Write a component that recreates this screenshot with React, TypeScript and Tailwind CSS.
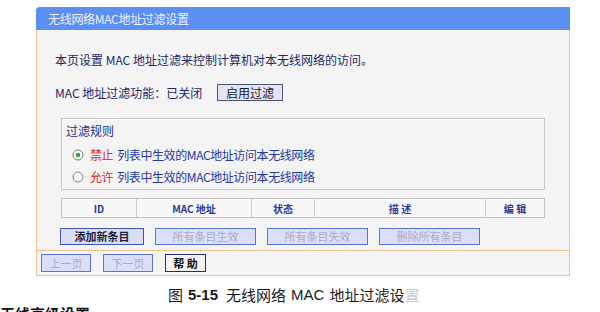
import React from 'react';

const cjk = { fontFamily: '"Noto Sans CJK SC", "Liberation Sans", sans-serif' };

const Radio: React.FC<{ checked?: boolean }> = ({ checked }) => (
    <svg width="12" height="12" viewBox="0 0 12 12" className="shrink-0">
        <circle cx="6" cy="6" r="5" fill="#fbfbfb" stroke="#7d8088" strokeWidth="1" />
        {checked && <circle cx="6" cy="6" r="2.3" fill="#3f9a4a" />}
    </svg>
);

const Btn: React.FC<{ label: string; w: string; disabled?: boolean; strong?: boolean; h?: string }> = ({
    label,
    w,
    disabled,
    strong,
    h = 'h-[17px]',
}) => (
    <div
        className={`${w} ${h} flex items-center justify-center border text-[11px] leading-none ${
            disabled
                ? 'bg-[#dcdff8] border-[#5b73d6] text-[#a9abc9]'
                : strong
                ? 'bg-[#f3f3f6] border-[#24306e] text-[#111] font-bold'
                : 'bg-[#d9ddf6] border-[#3e53b4] text-[#1b1d3a] font-bold'
        }`}
    >
        {label}
    </div>
);

export default function App() {
    return (
        <div className="w-[600px] h-[312px] overflow-hidden bg-white relative" style={cjk}>
            <div className="pt-[7px] pl-[36px]">
                <div className="w-[534px]">
                    {/* title bar */}
                    <div className="h-[23px] bg-[#5c8ff4] rounded-tl-[4px] flex items-center pl-[12px] text-[12px] text-[#eef2ff] tracking-[-0.3px]">
                        无线网络MAC地址过滤设置
                    </div>
                    {/* body */}
                    <div className="bg-[#f4f4f4] border-x border-b border-[#f0c48c]">
                        <div className="pt-[23px] px-[24px] text-[#1c2966]">
                            <div className="h-[14px] flex items-center text-[12px] -ml-[6px]">
                                本页设置 MAC 地址过滤来控制计算机对本无线网络的访问。
                            </div>
                            <div className="mt-[17px] h-[17px] flex items-center -ml-[6px]">
                                <span className="text-[12px] w-[162px]">MAC 地址过滤功能：已关闭</span>
                                <div className="w-[66px] h-[17px] flex items-center justify-center border border-[#4d5378] bg-[#e2e5f6] text-[12px] text-[#1a1a1a]">
                                    启用过滤
                                </div>
                            </div>

                            {/* fieldset */}
                            <div className="mt-[17px] h-[72px] border border-[#c7c7c7] shadow-[inset_1px_1px_0_#ffffff] pl-[4px] pt-[5px]">
                                <div className="h-[14px] flex items-center text-[12px] text-[#233080]">过滤规则</div>
                                <div className="mt-[10px] h-[14px] flex items-center pl-[6px] text-[12px] tracking-[-0.4px]">
                                    <Radio checked />
                                    <span className="ml-[6px] text-[#e02424]">禁止</span>
                                    <span className="ml-[4px] text-[#2438a0]">列表中生效的MAC地址访问本无线网络</span>
                                </div>
                                <div className="mt-[8px] h-[14px] flex items-center pl-[6px] text-[12px] tracking-[-0.4px]">
                                    <Radio />
                                    <span className="ml-[6px] text-[#e02424]">允许</span>
                                    <span className="ml-[4px] text-[#2438a0]">列表中生效的MAC地址访问本无线网络</span>
                                </div>
                            </div>

                            {/* table header */}
                            <div className="mt-[8px] h-[20px] flex border border-[#c4c4c4] bg-[#f7f7f7] text-[10px] font-bold text-[#2a3a96]">
                                <div className="w-[75px] flex items-center justify-center border-r border-[#cfcfcf]">ID</div>
                                <div className="w-[115px] flex items-center justify-center border-r border-[#cfcfcf]">MAC 地址</div>
                                <div className="w-[63px] flex items-center justify-center border-r border-[#cfcfcf]">状态</div>
                                <div className="w-[171px] flex items-center justify-center border-r border-[#cfcfcf]">描 述</div>
                                <div className="flex-1 flex items-center justify-center">编 辑</div>
                            </div>

                            {/* action buttons */}
                            <div className="mt-[10px] flex gap-[11px] -ml-[1px]">
                                <Btn label="添加新条目" w="w-[84px]" />
                                <Btn label="所有条目生效" w="w-[101px]" disabled />
                                <Btn label="所有条目失效" w="w-[101px]" disabled />
                                <Btn label="删除所有条目" w="w-[101px]" disabled />
                            </div>
                        </div>
                        <div className="mt-[5px] border-t border-[#f0c48c] h-[25px] flex items-center gap-[12px] pl-[4px]">
                            <Btn label="上一页" w="w-[50px]" h="h-[18px]" disabled />
                            <Btn label="下一页" w="w-[50px]" h="h-[18px]" disabled />
                            <Btn label="帮 助" w="w-[41px]" h="h-[18px]" strong />
                        </div>
                    </div>
                </div>
            </div>

            {/* caption */}
            <div className="absolute left-[168px] top-[287px] flex items-center h-[17px] text-[15px] text-[#1a1a1a] whitespace-nowrap">
                <span>图</span>
                <span className="ml-[5px] font-bold" style={{ fontFamily: '"Liberation Sans", sans-serif' }}>5-15</span>
                <span className="ml-[8px]">无线网络</span>
                <span className="ml-[5px]" style={{ fontFamily: '"Liberation Sans", sans-serif' }}>MAC</span>
                <span className="ml-[5px]">地址过滤设</span>
                <span className="text-[#c8c8c8]">置</span>
            </div>
            <div className="absolute left-0 top-[305px] text-[15px] leading-[17px] font-bold text-[#111] whitespace-nowrap">
                无线高级设置
            </div>
        </div>
    );
}
